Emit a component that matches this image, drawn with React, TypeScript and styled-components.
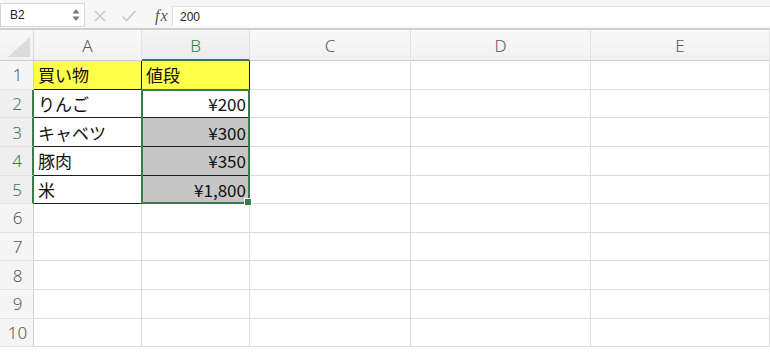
import styled, { createGlobalStyle } from "styled-components";

const GlobalStyle = createGlobalStyle`
    html, body {
        margin: 0;
        padding: 0;
        background: #ffffff;
    }
    body {
        font-family: "Noto Sans", "Noto Sans CJK JP", sans-serif;
        overflow: hidden;
    }
`

const GREEN = "#3c7b4c";

const columns = ["A", "B", "C", "D", "E"];

type CellData = { text?: string; align?: "left" | "right"; yellow?: boolean; boxed?: boolean; selected?: boolean };

const rows: CellData[][] = [
    [{ text: "買い物", yellow: true, boxed: true }, { text: "値段", yellow: true, boxed: true }],
    [{ text: "りんご", boxed: true }, { text: "¥200", align: "right", boxed: true }],
    [{ text: "キャベツ", boxed: true }, { text: "¥300", align: "right", boxed: true, selected: true }],
    [{ text: "豚肉", boxed: true }, { text: "¥350", align: "right", boxed: true, selected: true }],
    [{ text: "米", boxed: true }, { text: "¥1,800", align: "right", boxed: true, selected: true }],
];

const App = () => {
    return (
        <Page>
            <GlobalStyle />
            <FormulaBar>
                <NameBox>
                    <span>B2</span>
                    <Stepper>
                        <svg width="8" height="14" viewBox="0 0 8 14">
                            <path d="M4 1 L7.5 5.5 L0.5 5.5 Z" fill="#7a7a7a" />
                            <path d="M4 13 L7.5 8.5 L0.5 8.5 Z" fill="#7a7a7a" />
                        </svg>
                    </Stepper>
                </NameBox>
                <BarIcons>
                    <svg width="14" height="14" viewBox="0 0 14 14">
                        <path d="M2 2 L12 12 M12 2 L2 12" stroke="#c9c9c9" strokeWidth="1.6" fill="none" />
                    </svg>
                    <svg width="16" height="14" viewBox="0 0 16 14">
                        <path d="M1.5 7.5 L5.5 11.5 L14.5 2" stroke="#c9c9c9" strokeWidth="1.6" fill="none" />
                    </svg>
                    <Fx>fx</Fx>
                </BarIcons>
                <FormulaInput>200</FormulaInput>
            </FormulaBar>
            <Sheet>
                <Corner>
                    <svg width="26" height="22" viewBox="0 0 26 22">
                        <path d="M25 1 L25 21 L3 21 Z" fill="#dcdcdc" />
                    </svg>
                </Corner>
                {columns.map((c, i) => (
                    <ColHeader key={c} $col={i + 2} $selected={c === "B"}>{c}</ColHeader>
                ))}
                {Array.from({ length: 10 }).map((_, r) => (
                    <RowGroup key={r} r={r} />
                ))}
                <Selection>
                    <FillHandle />
                </Selection>
            </Sheet>
        </Page>
    );
}

const RowGroup = ({ r }: { r: number }) => {
    const data = rows[r] || [];
    return (
        <>
            <RowHeader $row={r + 2} $selected={r >= 1 && r <= 4}>{r + 1}</RowHeader>
            {columns.map((c, i) => {
                const cell = data[i] || {};
                return (
                    <Cell
                        key={c}
                        $row={r + 2}
                        $col={i + 2}
                        $align={cell.align || "left"}
                        $yellow={!!cell.yellow}
                        $boxed={!!cell.boxed}
                        $selected={!!cell.selected}
                    >
                        {cell.text}
                    </Cell>
                );
            })}
        </>
    );
}

const Page = styled.div`
    width: 770px;
    height: 355px;
    display: flex;
    flex-direction: column;
    background: #ffffff;
`

const FormulaBar = styled.div`
    height: 30px;
    display: flex;
    align-items: stretch;
    background: #f7f7f7;
    border-bottom: 2px solid #cfcfcf;
    box-sizing: border-box;
    padding-top: 3px;
`

const NameBox = styled.div`
    width: 85px;
    height: 24px;
    box-sizing: border-box;
    background: #ffffff;
    border: 1px solid #d6d6d6;
    display: flex;
    align-items: center;
    justify-content: space-between;
    padding: 0 4px 0 9px;
    font-family: "Liberation Sans", "Noto Sans", sans-serif;
    font-size: 12px;
    color: #222;
`

const Stepper = styled.div`
    display: flex;
    align-items: center;
`

const BarIcons = styled.div`
    width: 87px;
    display: flex;
    align-items: center;
    gap: 14px;
    padding-left: 8px;
    box-sizing: border-box;
`

const Fx = styled.span`
    font-family: "Liberation Serif", "DejaVu Serif", serif;
    font-style: italic;
    font-size: 16px;
    color: #555;
    margin-left: 4px;
    letter-spacing: 1px;
`

const FormulaInput = styled.div`
    flex: 1;
    margin-top: 3px;
    height: 19px;
    background: #ffffff;
    border-left: 1px solid #dcdcdc;
    border-top: 1px solid #e4e4e4;
    display: flex;
    align-items: center;
    padding-left: 7px;
    font-family: "Liberation Sans", "Noto Sans", sans-serif;
    font-size: 12px;
    color: #222;
`

const Sheet = styled.div`
    flex: 1;
    display: grid;
    grid-template-columns: 34px 108px 108px 161px 180px 179px;
    grid-template-rows: 31px repeat(10, 28.63px);
    overflow: hidden;
`

const Corner = styled.div`
    grid-row: 1;
    grid-column: 1;
    background: linear-gradient(#f9f9f9, #f1f1f1);
    border-right: 1px solid #dadada;
    border-bottom: 1px solid #cfcfcf;
    display: flex;
    align-items: flex-end;
    justify-content: flex-end;
    padding: 0 2px 2px 0;
    box-sizing: border-box;
`

const ColHeader = styled.div<{ $col: number; $selected: boolean }>`
    grid-row: 1;
    grid-column: ${p => p.$col};
    background: ${p => (p.$selected ? "linear-gradient(#f4f4f4, #ececec)" : "linear-gradient(#f9f9f9, #f1f1f1)")};
    border-right: 1px solid #e2e2e2;
    border-bottom: ${p => (p.$selected ? `2px solid ${GREEN}` : "1px solid #cfcfcf")};
    box-sizing: border-box;
    display: flex;
    align-items: center;
    justify-content: center;
    font-size: 17px;
    font-weight: 300;
    color: ${p => (p.$selected ? GREEN : "#5a5a5a")};
    padding-top: 1px;
`

const RowHeader = styled.div<{ $row: number; $selected: boolean }>`
    grid-row: ${p => p.$row};
    grid-column: 1;
    background: ${p => (p.$selected ? "#efefef" : "#f5f5f5")};
    border-right: ${p => (p.$selected ? `2px solid ${GREEN}` : "1px solid #d2d2d2")};
    border-bottom: 1px solid #e2e2e2;
    box-sizing: border-box;
    display: flex;
    align-items: center;
    justify-content: center;
    padding-left: 2px;
    font-size: 17px;
    font-weight: 300;
    color: ${p => (p.$selected ? GREEN : "#5a5a5a")};
`

const Cell = styled.div<{ $row: number; $col: number; $align: "left" | "right"; $yellow: boolean; $boxed: boolean; $selected: boolean }>`
    grid-row: ${p => p.$row};
    grid-column: ${p => p.$col};
    box-sizing: border-box;
    background: ${p => (p.$yellow ? "#ffff4b" : p.$selected ? "#c6c6c6" : "#ffffff")};
    border-right: 1px solid ${p => (p.$boxed ? "#1e1e1e" : "#dcdcdc")};
    border-bottom: 1px solid ${p => (p.$boxed ? "#1e1e1e" : "#dcdcdc")};
    display: flex;
    align-items: center;
    justify-content: ${p => (p.$align === "right" ? "flex-end" : "flex-start")};
    padding: 0 3px 0 4px;
    font-family: "Noto Sans CJK JP", "Noto Sans", sans-serif;
    font-size: 17px;
    color: #111;
    white-space: nowrap;
`

const Selection = styled.div`
    grid-column: 3;
    grid-row: 3 / 7;
    margin: -1px 0 0 -1px;
    border: 2px solid ${GREEN};
    box-sizing: border-box;
    pointer-events: none;
    position: relative;
`

const FillHandle = styled.div`
    position: absolute;
    right: -4px;
    bottom: -4px;
    width: 6px;
    height: 6px;
    background: ${GREEN};
    border: 1px solid #ffffff;
`

export default App;
